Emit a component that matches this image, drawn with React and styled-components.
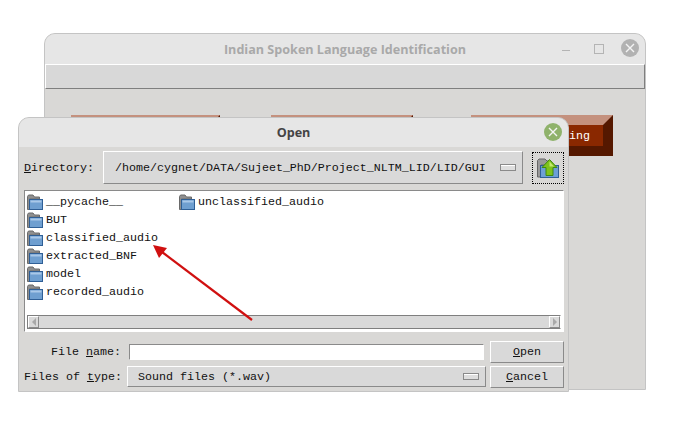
import styled, { createGlobalStyle } from "styled-components";

const GlobalStyle = createGlobalStyle`
  html, body {
    margin: 0;
    padding: 0;
    background: #ffffff;
  }
`;

const mono = `"Liberation Mono", "DejaVu Sans Mono", monospace`;

const Desktop = styled.div`
  position: relative;
  width: 697px;
  height: 437px;
  overflow: hidden;
  background: #ffffff;
  font-family: ${mono};
  font-size: 11.67px;
  color: #111111;
`;

const Window = styled.div`
  position: absolute;
  left: ${(p) => p.$left}px;
  top: ${(p) => p.$top}px;
  width: ${(p) => p.$width}px;
  height: ${(p) => p.$height}px;
  box-sizing: border-box;
  display: flex;
  flex-direction: column;
  background: #d9d8d6;
  border: 1px solid #c4c4c4;
  border-top-left-radius: 11px;
  border-top-right-radius: 11px;
  overflow: hidden;
`;

const TitleBar = styled.div`
  position: relative;
  flex: none;
  height: ${(p) => p.$height}px;
  display: flex;
  align-items: center;
  justify-content: center;
  background: #e6e6e6;
  font-family: "Open Sans", "Noto Sans", sans-serif;
  font-weight: 700;
  font-size: 12.6px;
  color: ${(p) => p.$color};
`;

const CloseDot = styled.div`
  position: absolute;
  right: ${(p) => p.$right}px;
  top: ${(p) => p.$top}px;
  width: 18px;
  height: 18px;
  border-radius: 50%;
  background: ${(p) => p.$color};
  display: flex;
  align-items: center;
  justify-content: center;
`;

const MinMark = styled.div`
  position: absolute;
  left: 517px;
  top: 16px;
  width: 8px;
  height: 1px;
  background: #b4b4b4;
`;

const MaxMark = styled.div`
  position: absolute;
  left: 549px;
  top: 10px;
  width: 8px;
  height: 8px;
  border: 1px solid #b4b4b4;
`;

const MenuBar = styled.div`
  flex: none;
  height: 25px;
  box-sizing: border-box;
  background: #d8d8d8;
  border-top: 1px solid #ffffff;
  border-left: 1px solid #ffffff;
  border-bottom: 1px solid #7f7f7f;
  border-right: 1px solid #7f7f7f;
`;

const ButtonRow = styled.div`
  display: flex;
  padding: 26px 0 0 26px;
`;

const BevelButton = styled.div`
  flex: none;
  margin-left: ${(p) => p.$gap}px;
  width: ${(p) => p.$width}px;
  height: 41px;
  box-sizing: border-box;
  border-style: solid;
  border-width: 10px;
  border-color: #c4917e #551800 #551800 #c4917e;
  background: #8a2800;
  color: #ffffff;
  display: flex;
  align-items: center;
  justify-content: flex-end;
  padding-right: 13px;
`;

const DialogBody = styled.div`
  flex: 1;
  display: flex;
  flex-direction: column;
  padding: 4px 4px 0 5px;
`;

const DirRow = styled.div`
  display: flex;
  align-items: center;
  height: 33px;
`;

const DirLabel = styled.div`
  width: 79px;
`;

const Key = styled.span`
  text-decoration: underline;
`;

const OptionMenu = styled.div`
  flex: none;
  width: ${(p) => p.$width}px;
  height: ${(p) => p.$height}px;
  box-sizing: border-box;
  display: flex;
  align-items: center;
  justify-content: space-between;
  padding: 0 6px 0 ${(p) => p.$pad}px;
  border: 1px solid;
  border-color: #ffffff #8a8a8a #8a8a8a #ffffff;
  background: #d9d9d9;
  white-space: nowrap;
`;

const MenuMark = styled.div`
  flex: none;
  width: 16px;
  height: 7px;
  box-sizing: border-box;
  border: 1px solid #8a8a8a;
  background: #dedede;
  box-shadow: inset 0 1px #ffffff;
`;

const UpButton = styled.div`
  flex: none;
  margin-left: 9px;
  width: 32px;
  height: 32px;
  box-sizing: border-box;
  border: 1px dotted #000000;
  display: flex;
  align-items: center;
  justify-content: center;
`;

const ListBox = styled.div`
  flex: none;
  margin-top: 6px;
  width: 540px;
  height: 142px;
  box-sizing: border-box;
  background: #ffffff;
  border: 1px solid;
  border-color: #8a8a8a #ffffff #ffffff #8a8a8a;
  display: flex;
  flex-direction: column;
  padding: 2px 2px 2px 2px;
`;

const FileGrid = styled.div`
  flex: 1;
  display: grid;
  grid-auto-flow: column;
  grid-template-rows: repeat(6, 18px);
  grid-auto-columns: 152px;
`;

const FileItem = styled.div`
  display: flex;
  align-items: center;
  gap: 3px;
  white-space: nowrap;
`;

const ScrollBar = styled.div`
  flex: none;
  height: 14px;
  box-sizing: border-box;
  display: flex;
  justify-content: space-between;
  background: #d9d9d9;
  border: 1px solid;
  border-color: #7f7f7f #ffffff #7f7f7f #7f7f7f;
`;

const ScrollArrow = styled.div`
  width: 11px;
  box-sizing: border-box;
  display: flex;
  align-items: center;
  justify-content: center;
  border: 1px solid;
  border-color: #ffffff #8a8a8a #8a8a8a #ffffff;
  &::before {
    content: "";
    border-style: solid;
    border-width: 4px 0 4px 0;
    border-color: transparent;
    ${(p) =>
      p.$left
        ? "border-right: 4px solid #a8a8a8;"
        : "border-left: 4px solid #a8a8a8;"}
  }
`;

const FormGrid = styled.div`
  display: grid;
  grid-template-columns: 97px minmax(0, 1fr) 80px;
  grid-template-rows: 25px 25px;
  margin-top: 7px;
  align-items: center;
`;

const FormLabel = styled.div`
  text-align: right;
  white-space: pre;
`;

const Field = styled.input`
  width: 355px;
  height: 16px;
  margin-left: 8px;
  padding: 0;
  box-sizing: border-box;
  border: 1px solid;
  border-color: #8a8a8a #ffffff #ffffff #8a8a8a;
  background: #ffffff;
  outline: none;
`;

const MenuCell = styled.div`
  margin-left: 6px;
`;

const DialogButton = styled.div`
  justify-self: end;
  width: 74px;
  height: 22px;
  box-sizing: border-box;
  display: flex;
  align-items: center;
  justify-content: center;
  border: 1px solid;
  border-color: #ffffff #8a8a8a #8a8a8a #ffffff;
  background: #d9d9d9;
`;

const Annotation = styled.svg`
  position: absolute;
  left: 0;
  top: 0;
  pointer-events: none;
`;

const FolderIcon = () => (
  <svg width="16" height="16" viewBox="0 0 16 16">
    <path d="M0.5 2.5 L1.5 1 H6 L7.5 3 H12.5 V5 H2.5 V15.5 H0.5 Z" fill="#8f8f8f" stroke="#6a6a6a" />
    <rect x="2.5" y="5.5" width="13" height="10" fill="#6f9fd0" stroke="#2f5f96" />
    <rect x="3.5" y="6.5" width="11" height="2" fill="#a9c8e8" />
  </svg>
);

const UpIcon = () => (
  <svg width="24" height="24" viewBox="0 0 24 24">
    <path d="M1.5 21 V4.5 L3 3 H9 L11 5 H15 V9 H5 V21 Z" fill="#9a9a9a" stroke="#666666" />
    <rect x="4.5" y="9.5" width="18" height="12" fill="#6d9fd6" stroke="#2f5f96" />
    <path d="M13.5 3.5 L21 11.5 H17 V19.5 H10 V11.5 H6 Z" fill="#7fc31c" stroke="#3f8a10" strokeLinejoin="round" />
    <path d="M13.5 5.5 L18 10.5 H13.5 Z" fill="#c4ea70" />
  </svg>
);

const CloseIcon = () => (
  <svg width="10" height="10" viewBox="0 0 10 10">
    <path d="M1 1 L9 9 M9 1 L1 9" stroke="#f4f4f4" strokeWidth="1.4" />
  </svg>
);

const folders = [
  "__pycache__",
  "BUT",
  "classified_audio",
  "extracted_BNF",
  "model",
  "recorded_audio",
  "unclassified_audio",
];

const App = () => {
  return (
    <Desktop>
      <GlobalStyle />
      <Window $left={44} $top={33} $width={602} $height={357}>
        <TitleBar $height={30} $color="#a9a9a9">
          Indian Spoken Language Identification
          <MinMark />
          <MaxMark />
          <CloseDot $right={6} $top={5} $color="#b2b2b2">
            <CloseIcon />
          </CloseDot>
        </TitleBar>
        <MenuBar />
        <ButtonRow>
          <BevelButton $gap={0} $width={149} />
          <BevelButton $gap={51} $width={142} />
          <BevelButton $gap={58} $width={142}>
            ing
          </BevelButton>
        </ButtonRow>
      </Window>

      <Window $left={18} $top={117} $width={551} $height={275}>
        <TitleBar $height={29} $color="#444444">
          Open
          <CloseDot $right={6} $top={5} $color="#8fb26b">
            <CloseIcon />
          </CloseDot>
        </TitleBar>
        <DialogBody>
          <DirRow>
            <DirLabel>
              <Key>D</Key>irectory:
            </DirLabel>
            <OptionMenu $width={420} $height={33} $pad={11}>
              /home/cygnet/DATA/Sujeet_PhD/Project_NLTM_LID/LID/GUI
              <MenuMark />
            </OptionMenu>
            <UpButton>
              <UpIcon />
            </UpButton>
          </DirRow>
          <ListBox>
            <FileGrid>
              {folders.map((name) => (
                <FileItem key={name}>
                  <FolderIcon />
                  {name}
                </FileItem>
              ))}
            </FileGrid>
            <ScrollBar>
              <ScrollArrow $left />
              <ScrollArrow />
            </ScrollBar>
          </ListBox>
          <FormGrid>
            <FormLabel>
              File <Key>n</Key>ame:
            </FormLabel>
            <Field />
            <DialogButton>
              <Key>O</Key>pen
            </DialogButton>
            <FormLabel>
              Files of <Key>t</Key>ype:
            </FormLabel>
            <MenuCell>
              <OptionMenu $width={359} $height={21} $pad={10}>
                Sound files (*.wav)
                <MenuMark />
              </OptionMenu>
            </MenuCell>
            <DialogButton>
              <Key>C</Key>ancel
            </DialogButton>
          </FormGrid>
        </DialogBody>
      </Window>

      <Annotation width="697" height="437" viewBox="0 0 697 437">
        <line x1="252" y1="320" x2="162" y2="252" stroke="#d01010" strokeWidth="2.2" />
        <path d="M153 245 L167 248 L159 258 Z" fill="#d01010" />
      </Annotation>
    </Desktop>
  );
};

export default App;
